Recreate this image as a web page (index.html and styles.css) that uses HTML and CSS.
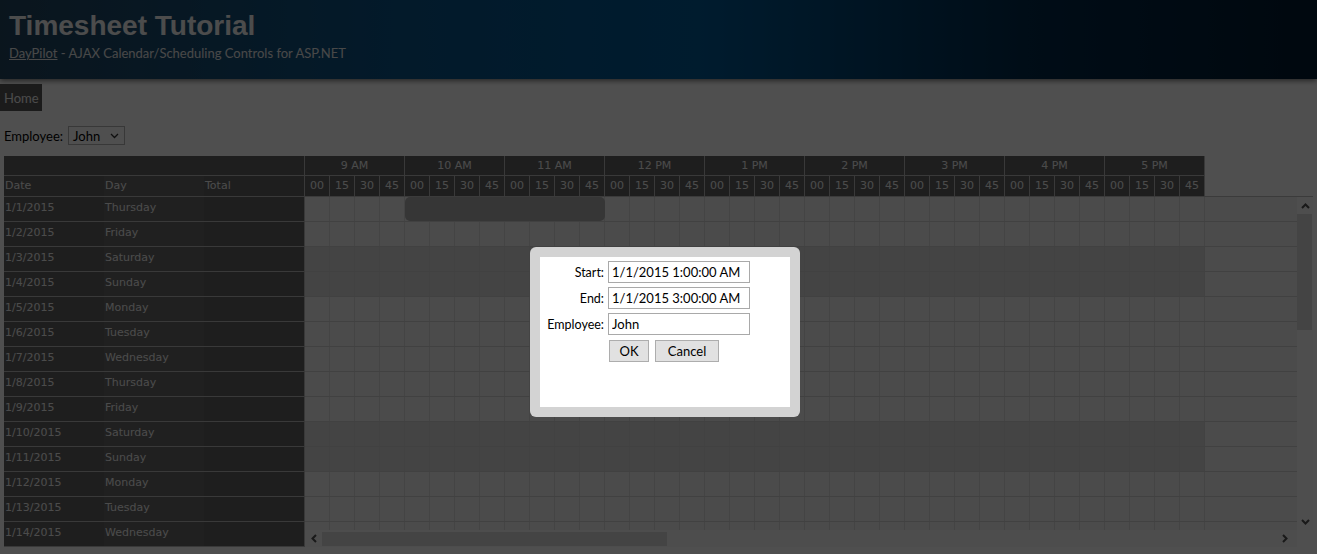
FILE: index.html
```html
<!DOCTYPE html>
<html lang="en">
<head>
    <meta charset="UTF-8">
    <meta name="viewport" content="width=device-width, initial-scale=1.0">
    <title>Timesheet Tutorial</title>
    <link rel="stylesheet" href="styles.css">
</head>
<body>
    <header class="banner">
        <h1>Timesheet Tutorial</h1>
        <div class="tagline"><a href="#">DayPilot</a> - AJAX Calendar/Scheduling Controls for ASP.NET</div>
    </header>

    <nav class="menu">
        <a class="tab" href="#">Home</a>
    </nav>

    <main class="content">
        <div class="filter">
            <label for="employee">Employee:</label>
            <div class="select">
                <span>John</span>
                <svg width="9" height="6" viewBox="0 0 9 6"><polyline points="1,1 4.5,4.5 8,1" fill="none" stroke="#333" stroke-width="1.3"/></svg>
            </div>
        </div>

        <div class="scheduler">
            <div class="row-header">
                <div class="rh-blank"></div>
                <div class="rh-titles">
                    <div class="rh-cell">Date</div>
                    <div class="rh-cell">Day</div>
                    <div class="rh-cell">Total</div>
                </div>
                <div id="rowHeaders"></div>
            </div>

            <div class="time-area">
                <div class="time-head">
                    <div class="hours" id="hours"></div>
                    <div class="minutes" id="minutes"></div>
                </div>
                <div class="viewport">
                    <div class="grid-area" id="grid"></div>
                    <div class="vscroll">
                        <div class="arrow">
                            <svg width="9" height="6" viewBox="0 0 9 6"><polyline points="1,5 4.5,1.5 8,5" fill="none" stroke="#505050" stroke-width="2"/></svg>
                        </div>
                        <div class="vthumb"></div>
                        <div class="arrow arrow-end">
                            <svg width="9" height="6" viewBox="0 0 9 6"><polyline points="1,1 4.5,4.5 8,1" fill="none" stroke="#505050" stroke-width="2"/></svg>
                        </div>
                    </div>
                </div>
                <div class="hscroll-row">
                    <div class="hscroll">
                        <div class="arrow">
                            <svg width="6" height="9" viewBox="0 0 6 9"><polyline points="5,1 1.5,4.5 5,8" fill="none" stroke="#505050" stroke-width="2"/></svg>
                        </div>
                        <div class="hthumb"></div>
                        <div class="arrow arrow-end">
                            <svg width="6" height="9" viewBox="0 0 6 9"><polyline points="1,1 4.5,4.5 1,8" fill="none" stroke="#505050" stroke-width="2"/></svg>
                        </div>
                    </div>
                    <div class="scroll-corner"></div>
                </div>
            </div>
        </div>
    </main>

    <div class="backdrop"></div>

    <div class="modal">
        <div class="modal-body">
            <div class="form">
                <label>Start:</label>
                <input type="text" value="1/1/2015 1:00:00 AM">
                <label>End:</label>
                <input type="text" value="1/1/2015 3:00:00 AM">
                <label>Employee:</label>
                <input type="text" value="John">
                <div class="buttons">
                    <button class="btn-ok">OK</button>
                    <button class="btn-cancel">Cancel</button>
                </div>
            </div>
        </div>
    </div>

    <script>
        const dayNames = ['Sunday', 'Monday', 'Tuesday', 'Wednesday', 'Thursday', 'Friday', 'Saturday'];
        const hourLabels = ['9 AM', '10 AM', '11 AM', '12 PM', '1 PM', '2 PM', '3 PM', '4 PM', '5 PM'];

        // time header: one cell per hour, four per hour below
        const hours = document.getElementById('hours');
        const minutes = document.getElementById('minutes');
        hourLabels.forEach(label => {
            const h = document.createElement('div');
            h.className = 'hour';
            h.textContent = label;
            hours.appendChild(h);
            ['00', '15', '30', '45'].forEach(m => {
                const c = document.createElement('div');
                c.className = 'minute';
                c.textContent = m;
                minutes.appendChild(c);
            });
        });

        // one row per day, header on the left and cells on the right
        const rowHeaders = document.getElementById('rowHeaders');
        const grid = document.getElementById('grid');
        for (let d = 1; d <= 14; d++) {
            const date = new Date(2015, 0, d);
            const weekend = date.getDay() === 0 || date.getDay() === 6;

            const rh = document.createElement('div');
            rh.className = 'rh-row';
            [`1/${d}/2015`, dayNames[date.getDay()], ''].forEach(text => {
                const cell = document.createElement('div');
                cell.className = 'rh-cell';
                cell.textContent = text;
                rh.appendChild(cell);
            });
            rowHeaders.appendChild(rh);

            const row = document.createElement('div');
            row.className = 'g-row';
            const cells = document.createElement('div');
            cells.className = weekend ? 'g-cells weekend' : 'g-cells';
            row.appendChild(cells);

            if (d === 1) {
                const ev = document.createElement('div');
                ev.className = 'event';
                row.appendChild(ev);
            }
            grid.appendChild(row);
        }
    </script>
</body>
</html>
```

FILE: styles.css
```css
body {
    margin: 0;
    padding: 0;
    background-color: #ffffff;
    font-family: Lato, "Open Sans", sans-serif;
    font-size: 13px;
    color: #000;
}

/* top banner */
.banner {
    height: 79px;
    box-sizing: border-box;
    padding: 9px 9px 0;
    background: linear-gradient(to right, #22455f 0%, #0b5488 30%, #005a96 53%, #002a4a 78%, #001a30 100%);
    box-shadow: 0 2px 5px rgba(0, 0, 0, 0.5);
    color: #ffffff;
}

.banner h1 {
    margin: 0;
    font-family: "Liberation Sans", Arial, sans-serif;
    font-size: 28px;
    font-weight: bold;
    line-height: 34px;
    color: #f4f4f4;
}

.tagline {
    margin-top: 2px;
    font-size: 13px;
    color: #e8e8e8;
}

.tagline a {
    color: #e8e8e8;
}

/* menu */
.menu {
    margin-top: 5px;
    height: 27px;
    display: flex;
}

.tab {
    display: block;
    width: 42px;
    box-sizing: border-box;
    background-color: #575757;
    color: #f2f2f2;
    text-decoration: none;
    padding-left: 4px;
    line-height: 28px;
    font-size: 13px;
}

.content {
    padding: 15px 4px 0;
}

.filter {
    display: flex;
    align-items: center;
    gap: 5px;
    height: 19px;
}

.select {
    display: flex;
    align-items: center;
    justify-content: space-between;
    box-sizing: border-box;
    width: 57px;
    height: 19px;
    border: 1px solid #b4b4b4;
    padding: 0 5px 0 4px;
    font-size: 13px;
}

/* scheduler */
.scheduler {
    display: flex;
    margin-top: 11px;
    width: 1309px;
    height: 391px;
    font-family: "DejaVu Sans", Verdana, sans-serif;
    font-size: 11px;
}

.row-header {
    width: 300px;
    flex: none;
    border-right: 1px solid #b8b8b8;
    background-color: #616161;
    color: #f2f2f2;
    overflow: hidden;
}

.rh-blank {
    height: 19px;
    border-bottom: 1px solid #b8b8b8;
}

.rh-titles {
    display: flex;
    height: 20px;
    border-bottom: 1px solid #b8b8b8;
    line-height: 20px;
}

.rh-row {
    display: flex;
    height: 24px;
    border-bottom: 1px solid #b8b8b8;
    line-height: 22px;
}

.rh-cell {
    width: 100px;
    box-sizing: border-box;
    padding-left: 1px;
    white-space: nowrap;
}

.rh-cell:nth-child(2) {
    background-color: #676767;
}

.time-area {
    width: 1008px;
    display: flex;
    flex-direction: column;
}

.time-head {
    border-bottom: 1px solid #bdbdbd;
}

.hours,
.minutes {
    display: flex;
    width: 900px;
    background-color: #616161;
    color: #f2f2f2;
}

.hours {
    height: 19px;
    border-bottom: 1px solid #b8b8b8;
}

.hour {
    width: 99px;
    flex: none;
    border-right: 1px solid #b8b8b8;
    text-align: center;
    line-height: 20px;
}

.minutes {
    height: 20px;
}

.minute {
    width: 24px;
    flex: none;
    border-right: 1px solid #b8b8b8;
    text-align: center;
    line-height: 20px;
}

.viewport {
    display: flex;
    height: 333px;
}

.grid-area {
    width: 992px;
    overflow: hidden;
    background-color: #f3f3f3;
}

.g-row {
    position: relative;
    height: 24px;
    border-bottom: 1px solid #d2d2d2;
}

.g-cells {
    width: 900px;
    height: 100%;
    background-image: linear-gradient(to right, transparent 24px, #dcdcdc 24px);
    background-size: 25px 100%;
}

.g-cells.weekend {
    background-color: #dcdcdc;
    background-image: linear-gradient(to right, transparent 24px, #d4d4d4 24px);
}

.event {
    position: absolute;
    left: 100px;
    top: 0;
    width: 200px;
    height: 24px;
    border-radius: 5px;
    background-color: #aeaeae;
}

/* scrollbars */
.vscroll {
    width: 16px;
    display: flex;
    flex-direction: column;
    background-color: #fafafa;
}

.arrow {
    width: 16px;
    height: 17px;
    flex: none;
    display: flex;
    align-items: center;
    justify-content: center;
}

.arrow-end {
    margin-top: auto;
}

.vthumb {
    width: 15px;
    height: 116px;
    background-color: #dadada;
}

.hscroll-row {
    display: flex;
    height: 17px;
}

.hscroll {
    width: 992px;
    display: flex;
    align-items: center;
    background-color: #f7f7f7;
}

.hscroll .arrow {
    width: 17px;
    height: 17px;
}

.hthumb {
    width: 345px;
    height: 14px;
    background-color: #dadada;
}

.hscroll .arrow-end {
    margin-left: auto;
    margin-top: 0;
    width: 24px;
}

.scroll-corner {
    width: 16px;
}

/* modal dialog */
.backdrop {
    position: fixed;
    left: 0;
    top: 0;
    width: 100%;
    height: 100%;
    background-color: rgba(0, 0, 0, 0.69);
}

.modal {
    position: absolute;
    left: 530px;
    top: 247px;
    padding: 10px;
    background-color: #d3d3d3;
    border-radius: 6px;
}

.modal-body {
    width: 250px;
    height: 150px;
    box-sizing: border-box;
    background-color: #ffffff;
    padding: 4px 0 0 5px;
}

.form {
    display: grid;
    grid-template-columns: 59px 142px;
    column-gap: 4px;
    row-gap: 4px;
    align-items: center;
    font-size: 12.5px;
}

.form label {
    text-align: right;
    white-space: nowrap;
}

.form input {
    box-sizing: border-box;
    width: 142px;
    height: 22px;
    border: 1px solid #a9a9a9;
    padding: 0 3px;
    font-family: Lato, sans-serif;
    font-size: 13px;
    color: #000;
}

.buttons {
    grid-column: 2;
    display: flex;
    gap: 6px;
    margin-top: 1px;
    padding-left: 1px;
}

.buttons button {
    height: 22px;
    padding: 0;
    border: 1px solid #adadad;
    background-color: #e1e1e1;
    font-family: Lato, sans-serif;
    font-size: 13px;
    color: #000;
}

.btn-ok {
    width: 40px;
}

.btn-cancel {
    width: 64px;
}
```
